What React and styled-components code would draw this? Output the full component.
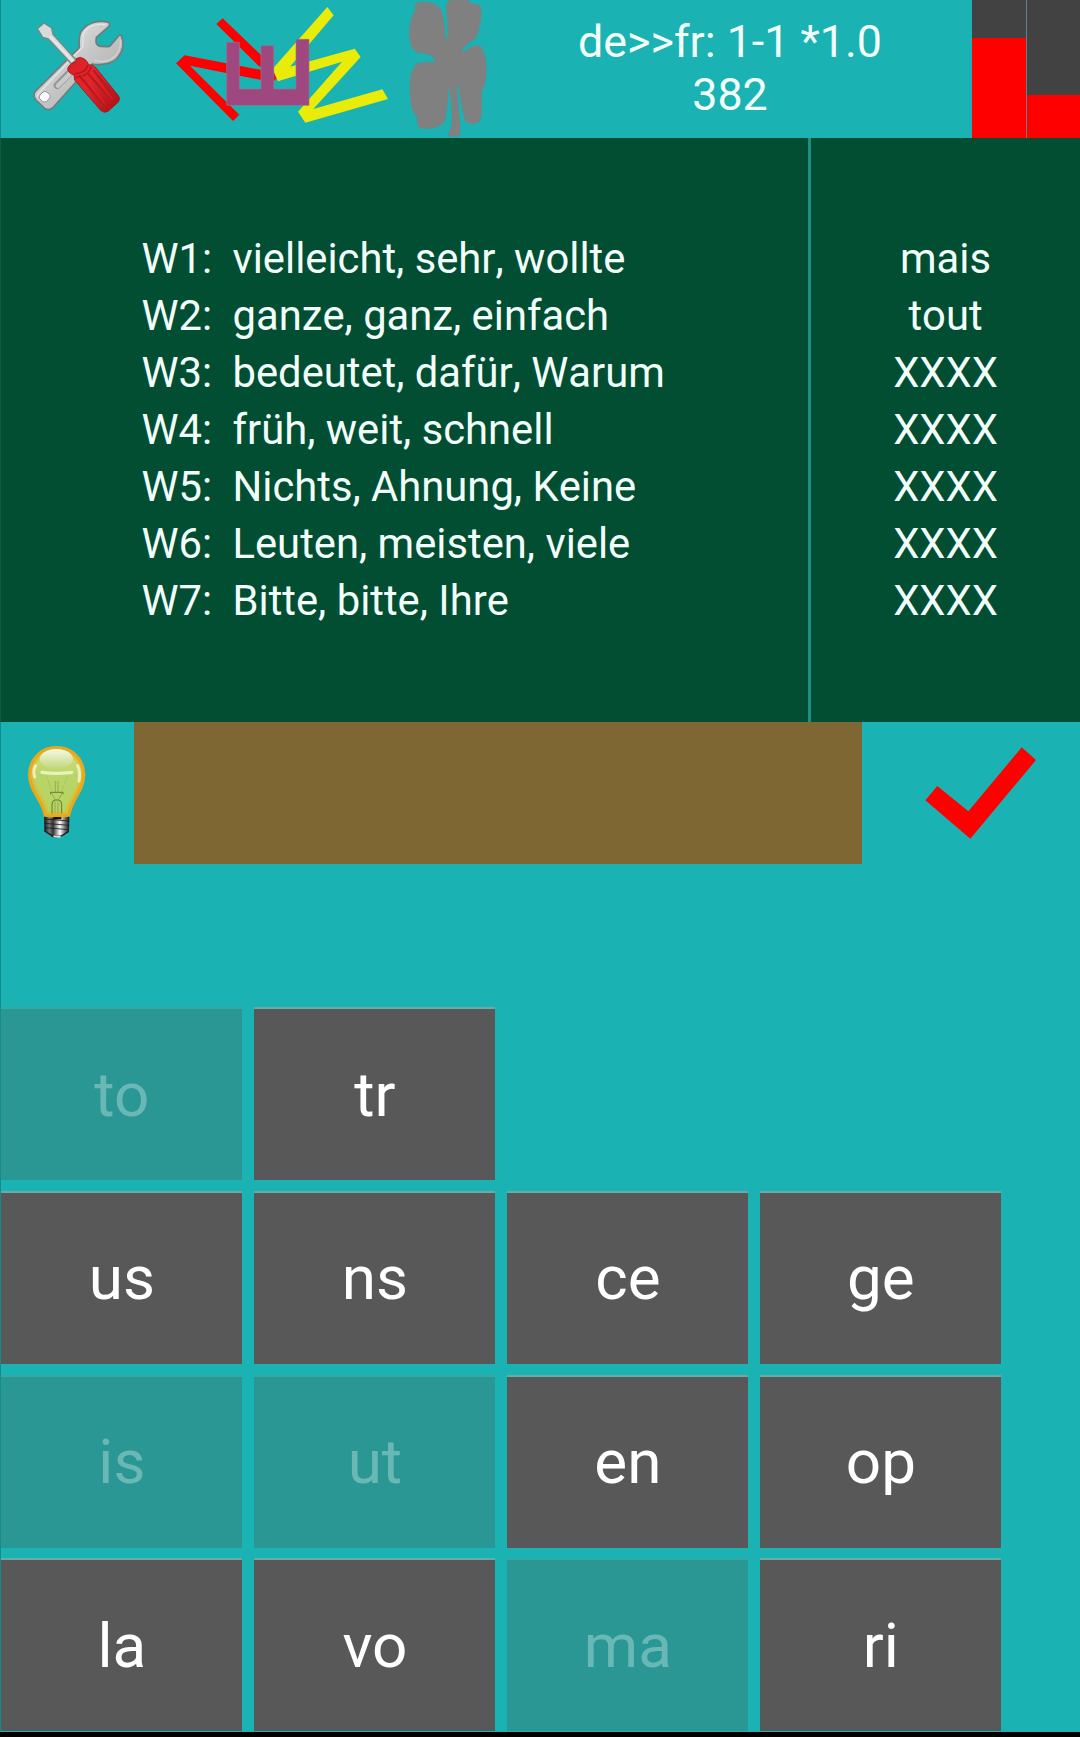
import React from "react";
import styled, { createGlobalStyle } from "styled-components";

const GlobalStyle = createGlobalStyle`
  body { margin: 0; background: #000; }
  * { box-sizing: border-box; }
`;

const Screen = styled.main`
  width: 1080px;
  height: 1737px;
  display: flex;
  flex-direction: column;
  background: #1bb2b3;
  border-bottom: 5px solid #000;
  font-family: Roboto, "Liberation Sans", sans-serif;
  font-kerning: none;
  color: #f2fffb;
  overflow: hidden;
`;

const Header = styled.header`
  display: flex;
  height: 138px;
  border-left: 1px solid #148c8d;
`;

const Icon = styled.svg`
  display: block;
  flex: none;
`;

const Status = styled.div`
  flex: 1;
  padding: 15px 32px 0 0;
  text-align: center;
  font-size: 44.8px;
  line-height: 53px;
`;

const Meters = styled.div`
  display: flex;
  gap: 1px;
  width: 108px;
  background: #5b8584;
`;

const Meter = styled.div`
  flex: 1;
  display: flex;
  align-items: flex-end;
  background: #424242;
`;

const MeterFill = styled.div`
  width: 100%;
  height: ${(p) => p.$level}px;
  background: #ff0000;
`;

const Board = styled.section`
  display: flex;
  height: 584px;
  background: #014e33;
  border-left: 1px solid #0a5c46;
  font-size: 41.75px;
  line-height: 57px;
`;

const Clues = styled.div`
  width: 807px;
  padding: 92px 0 0 140.5px;
`;

const Clue = styled.div`
  display: flex;
  white-space: nowrap;
`;

const ClueLabel = styled.span`
  width: 91px;
`;

const Answers = styled.div`
  flex: 1;
  padding-top: 92px;
  border-left: 3px solid #1f8d80;
  text-align: center;
`;

const EntryRow = styled.section`
  display: flex;
  height: 142px;
  border-left: 1px solid #148c8d;
`;

const Entry = styled.div`
  width: 729px;
  background: #7f6733;
`;

const Keyboard = styled.section`
  display: grid;
  grid-template-columns: repeat(4, 241px);
  grid-template-rows: repeat(4, 173px);
  column-gap: 12px;
  row-gap: 10.8px;
  padding: 143px 0 0 0.4px;
  height: 868px;
  border-left: 1px solid #148c8d;
`;

const Key = styled.button`
  grid-column: ${(p) => p.$column};
  border: 0;
  border-top: 2px solid ${(p) => (p.$used ? "#35a9a7" : "#6fa9a6")};
  padding: 0;
  background: ${(p) => (p.$used ? "#2b9795" : "#585858")};
  color: ${(p) => (p.$used ? "#6ab8b6" : "#ffffff")};
  font: 400 62px/72px Roboto, "Liberation Sans", sans-serif;
`;

const clues = [
  ["W1:", "vielleicht, sehr, wollte"],
  ["W2:", "ganze, ganz, einfach"],
  ["W3:", "bedeutet, dafür, Warum"],
  ["W4:", "früh, weit, schnell"],
  ["W5:", "Nichts, Ahnung, Keine"],
  ["W6:", "Leuten, meisten, viele"],
  ["W7:", "Bitte, bitte, Ihre"],
];

const answers = ["mais", "tout", "XXXX", "XXXX", "XXXX", "XXXX", "XXXX"];

const keyRows = [
  ["to", "tr"],
  ["us", "ns", "ce", "ge"],
  ["is", "ut", "en", "op"],
  ["la", "vo", "ma", "ri"],
];

const usedKeys = new Set(["to", "is", "ut", "ma"]);

function ToolsIcon() {
  return (
    <Icon width="159" height="138" viewBox="3 0 477 414">
      <defs>
        <linearGradient id="steel" x1="0" y1="0" x2="1" y2="1">
          <stop offset="0" stopColor="#f2f2f2" />
          <stop offset="0.5" stopColor="#c6c6c6" />
          <stop offset="1" stopColor="#a2a2a2" />
        </linearGradient>
        <linearGradient id="grip" x1="0" y1="0" x2="1" y2="0.6">
          <stop offset="0" stopColor="#d81f26" />
          <stop offset="0.5" stopColor="#e3262c" />
          <stop offset="1" stopColor="#b8141a" />
        </linearGradient>
      </defs>
      <path
        d="M326 67C296 59 258 68 242 98C236 112 237 130 238 143L105 275Q98 287 108 300L134 325Q146 333 158 324L276 192C300 196 334 193 352 174C372 152 372 126 364 107Q359 103 354 110L332 136Q327 141 320 140L301 139Q289 136 288 125L289 112L327 79Q331 72 326 67Z"
        fill="url(#steel)" stroke="#6d7d7d" strokeWidth="5" strokeLinejoin="round"
      />
      <path d="M282 182Q330 192 352 160Q363 143 361 119" fill="none" stroke="#d2d2d2" strokeWidth="4" />
      <path d="M318 74Q264 68 250 103L248 141L115 281L111 292" fill="none" stroke="#e4e4e4" strokeWidth="4" />
      <path d="M172 256L228 199" stroke="#969696" strokeWidth="22" strokeLinecap="round" />
      <path d="M174 257L229 202" stroke="#c9c9c9" strokeWidth="14" strokeLinecap="round" />
      <path d="M120 285L129 276Q134 273 140 276L149 283Q153 288 149 294L139 305Q133 308 127 304L119 296Q116 290 120 285Z" fill="#fff" stroke="#929292" strokeWidth="3" />
      <path d="M112 86L132 69L155 84L159 103L228 180L215 192L145 117L128 112Z" fill="#d5dada" stroke="#748686" strokeWidth="4" strokeLinejoin="round" />
      <path d="M150 109L218 183" stroke="#e9e9e9" strokeWidth="5" />
      <path
        d="M229 176Q241 168 253 177Q266 187 265 194L278 196L289 205L355 287Q363 298 352 309L324 334Q312 341 302 331L224 240L222 225Q205 220 203 206Q206 193 229 184Z"
        fill="url(#grip)" stroke="#a51c20" strokeWidth="3"
      />
      <path d="M224 221Q255 221 265 194M227 232L245 229Q265 224 274 201" fill="none" stroke="#b5121a" strokeWidth="4" />
      <path d="M240 229L309 313M263 219L334 301M282 213L346 292" stroke="#b91a20" strokeWidth="7" strokeLinecap="round" />
      <path d="M245 226L313 309M268 216L338 297" stroke="#e4292f" strokeWidth="3" strokeLinecap="round" />
    </Icon>
  );
}

function LogoIcon() {
  return (
    <Icon width="240" height="138" viewBox="0 0 720 414">
      <path d="M90 197L339 247L349 235L342 217L74 166L48 190L219 363L238 344Z" fill="#ff0000" />
      <path d="M169 72L188 55L306 168V204L294 196Z" fill="#ff0000" />
      <path d="M502 21L521 46L390 200L584 146L602 171L460 327L667 268L684 297L436 368L414 335L546 185L354 244L342 217V202Z" fill="#e8ec08" />
      <path d="M200 127H238V267H303V137H341V267H408V118H447V316H200Z" fill="#9e487f" stroke="#a26d88" strokeWidth="2" />
    </Icon>
  );
}

function CloverIcon() {
  return (
    <Icon width="120" height="138" viewBox="30 0 360 414">
      <path
        d="M77 12C90 2 127 5 144 19C160 30 161 68 168 116L174 117C175 88 170 45 168 18Q170 5 183 0H235L242 12Q268 10 273 22C275 55 269 94 257 112C247 127 225 132 216 149L219 156Q243 140 263 135C281 139 289 174 289 208C289 239 282 264 274 275C275 307 277 345 269 364Q253 377 228 367C218 346 211 286 204 254Q200 256 201 269L210 370V404Q205 411 176 407Q173 403 184 381Q189 355 180 268L176 267C174 300 171 340 163 367Q142 388 103 386Q86 384 82 373V351C64 338 60 300 60 263C60 229 65 204 82 190Q107 184 131 187Q138 182 130 171Q119 160 82 158C62 148 57 121 58 94C59 67 67 42 76 34Q72 22 77 12Z"
        fill="#808080" stroke="#648d8d" strokeWidth="2"
      />
    </Icon>
  );
}

function BulbIcon() {
  return (
    <Icon width="133" height="142" viewBox="3 36 399 426">
      <defs>
        <linearGradient id="glass" x1="0" y1="0" x2="0" y2="1">
          <stop offset="0" stopColor="#d9dd7c" />
          <stop offset="0.4" stopColor="#b9d56a" />
          <stop offset="1" stopColor="#b7d35c" />
        </linearGradient>
        <linearGradient id="shine" x1="0" y1="0" x2="0" y2="1">
          <stop offset="0" stopColor="#f6f8e4" />
          <stop offset="1" stopColor="#bfd878" />
        </linearGradient>
        <linearGradient id="socket" x1="0" y1="0" x2="1" y2="0">
          <stop offset="0" stopColor="#111" />
          <stop offset="0.2" stopColor="#777" />
          <stop offset="0.35" stopColor="#333" />
          <stop offset="0.62" stopColor="#fff" />
          <stop offset="0.82" stopColor="#777" />
          <stop offset="1" stopColor="#111" />
        </linearGradient>
      </defs>
      <path d="M133 317H208L207 364L185 381Q170 385 155 381L133 364Z" fill="url(#socket)" />
      <path d="M133 327L208 333M133 340L208 346M134 353L207 359" stroke="#1d1d1d" strokeWidth="2.5" fill="none" />
      <path d="M134 363L158 378H184L206 364" stroke="#1d1d1d" strokeWidth="4" fill="none" />
      <path d="M160 379H182" stroke="#ddd" strokeWidth="5" />
      <path d="M170 113C122 113 89 149 89 195C89 241 127 269 136 315Q170 321 206 315C213 269 251 241 251 195C251 149 217 113 170 113Z" fill="url(#glass)" stroke="#e8a91c" strokeWidth="10" />
      <path d="M170 121C129 121 97 151 97 195C97 238 135 265 143 309H199C205 265 243 238 243 195C243 151 209 121 170 121Z" fill="none" stroke="#e2b82c" strokeWidth="7" opacity="0.7" />
      <path d="M160 321H184V328H160Z" fill="#18130c" />
      <ellipse cx="169" cy="147" rx="50" ry="30" fill="url(#shine)" />
      <path d="M126 187Q170 193 215 187" stroke="#e6f3bd" strokeWidth="10" fill="none" strokeLinecap="round" />
      <path d="M107 167Q98 181 104 201M233 167Q242 185 237 213" stroke="#efeeb6" strokeWidth="9" fill="none" strokeLinecap="round" />
      <path d="M140 198L156 246M202 198L184 246" stroke="#9fba62" strokeWidth="1.5" fill="none" />
      <path d="M166 213V246M174 213V246M155 250L166 270M186 250L175 270M165 275V311M174 275V311" stroke="#809a4c" strokeWidth="2" fill="none" />
      <path d="M152 253V247H189V253M156 311V282Q156 271 166 270H175Q185 271 185 282V311" stroke="#647a3a" strokeWidth="3" fill="none" />
    </Icon>
  );
}

function CheckIcon() {
  return (
    <Icon width="218" height="142" viewBox="36 36 654 426">
      <path d="M226 271L262 228L355 304L515 112L558 150L361 386Z" fill="#ff0000" />
    </Icon>
  );
}

export default function App() {
  return (
    <>
      <GlobalStyle />
      <Screen>
        <Header>
          <ToolsIcon />
          <LogoIcon />
          <CloverIcon />
          <Status>
            <div>de&gt;&gt;fr: 1-1 *1.0</div>
            <div>382</div>
          </Status>
          <Meters>
            <Meter><MeterFill $level={100} /></Meter>
            <Meter><MeterFill $level={43} /></Meter>
          </Meters>
        </Header>
        <Board>
          <Clues>
            {clues.map(([label, words]) => (
              <Clue key={label}>
                <ClueLabel>{label}</ClueLabel>
                <span>{words}</span>
              </Clue>
            ))}
          </Clues>
          <Answers>
            {answers.map((answer, i) => (
              <div key={i}>{answer}</div>
            ))}
          </Answers>
        </Board>
        <EntryRow>
          <BulbIcon />
          <Entry />
          <CheckIcon />
        </EntryRow>
        <Keyboard>
          {keyRows.flatMap((row) =>
            row.map((label, i) => (
              <Key key={label} $column={i + 1} $used={usedKeys.has(label)}>
                {label}
              </Key>
            ))
          )}
        </Keyboard>
      </Screen>
    </>
  );
}
